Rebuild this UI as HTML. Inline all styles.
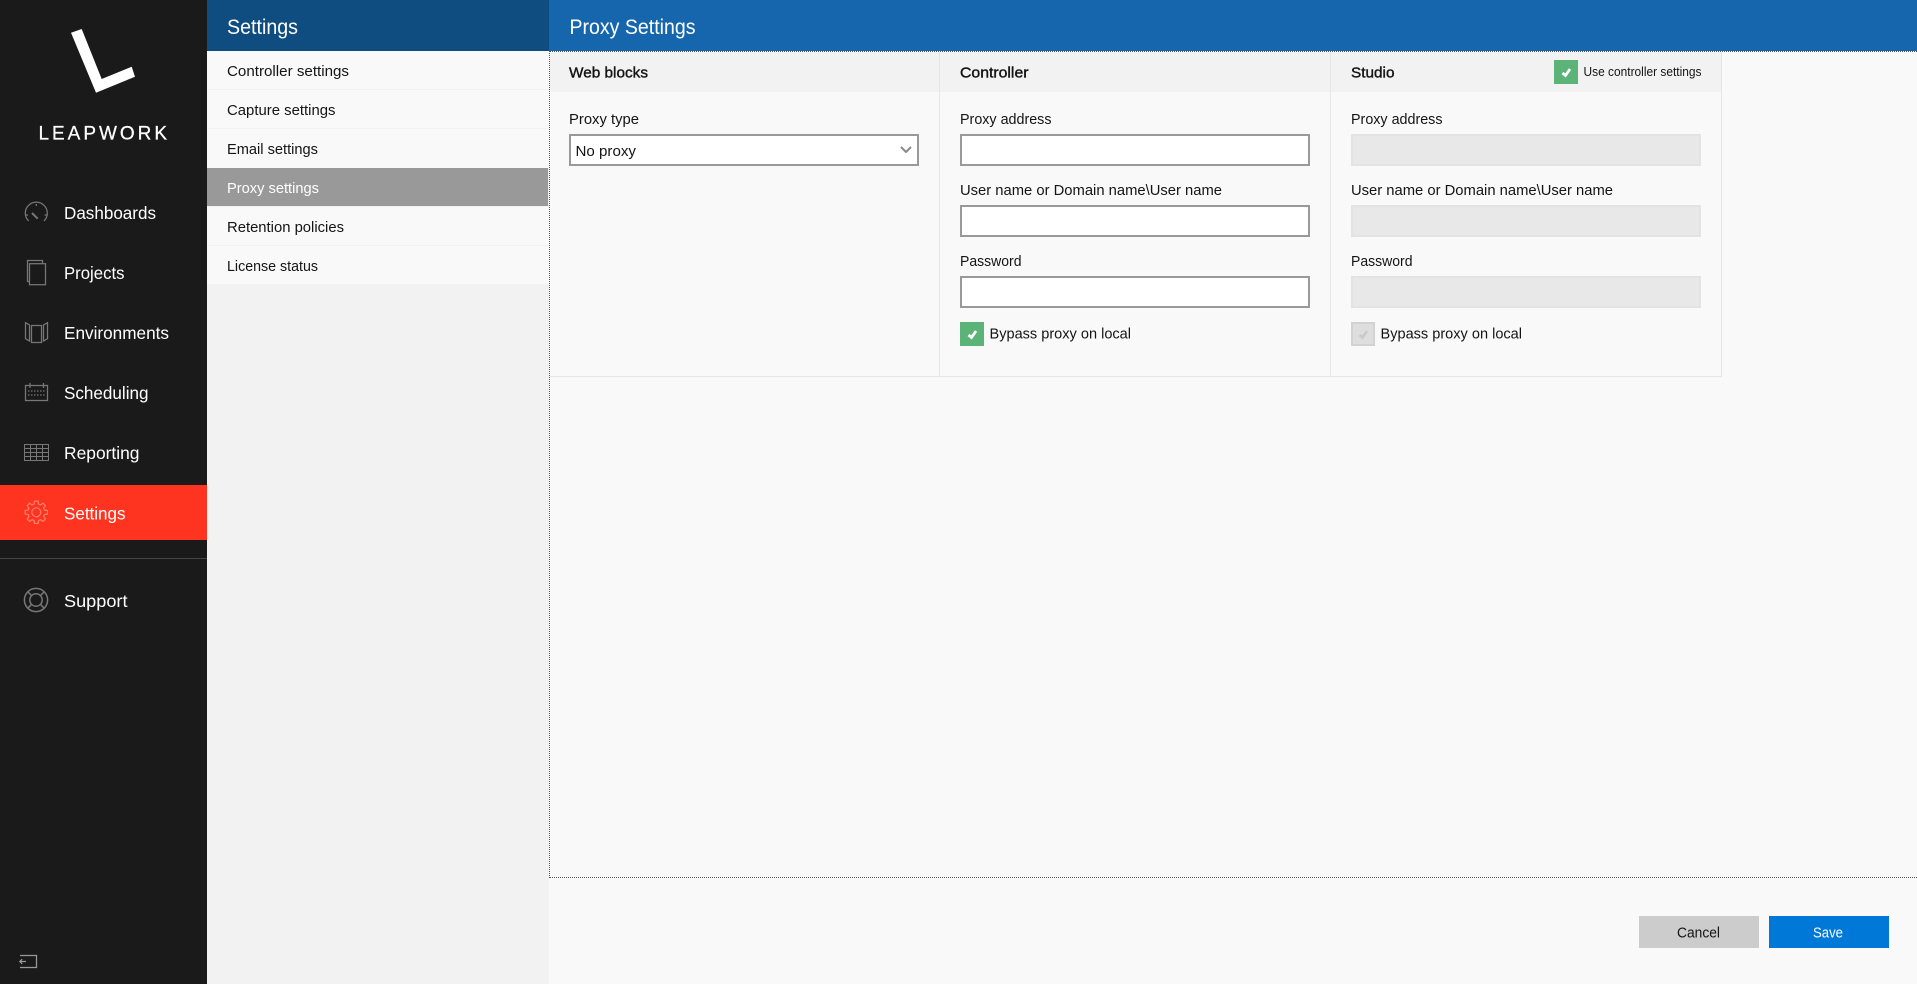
<!DOCTYPE html>
<html lang="en">
<head>
<meta charset="utf-8">
<title>Proxy Settings</title>
<style>
html,body{margin:0;padding:0;width:1917px;height:984px;overflow:hidden;background:#f9f9f9;font-family:"Liberation Sans",sans-serif}
.b{position:absolute;box-sizing:border-box}
.in{background:#fff;border:2px solid #999;width:350px;height:32px}
.dis{background:#e8e8e8;border:2px solid #e3e3e3;width:350px;height:32px}
svg{position:absolute;left:0;top:0}
text{font-family:"Liberation Sans",sans-serif;font-size:15px;fill:#141414}
.nav{font-size:17.5px;fill:#fff}
.hd{font-size:21.5px;fill:#fff}
.st{font-size:15px;stroke:#141414;stroke-width:.4}
.ic{fill:none;stroke:#777;stroke-width:1.25}
</style>
</head>
<body>
<!-- sidebar -->
<div class="b" style="left:0;top:0;width:207px;height:984px;background:#1a1a1a"></div>
<div class="b" style="left:0;top:485px;width:207px;height:55px;background:#ff3420"></div>
<div class="b" style="left:0;top:558px;width:207px;height:1px;background:#454545"></div>
<!-- sub panel -->
<div class="b" style="left:207px;top:0;width:342px;height:984px;background:#f2f2f2"></div>
<div class="b" style="left:207px;top:0;width:342px;height:51px;background:#0f4c7f"></div>
<div class="b" style="left:207px;top:51px;width:342px;height:38px;background:#f9f9f9"></div>
<div class="b" style="left:207px;top:90px;width:342px;height:38px;background:#f9f9f9"></div>
<div class="b" style="left:207px;top:129px;width:342px;height:39px;background:#f9f9f9"></div>
<div class="b" style="left:207px;top:168px;width:341px;height:38px;background:#999"></div>
<div class="b" style="left:207px;top:207px;width:342px;height:38px;background:#f9f9f9"></div>
<div class="b" style="left:207px;top:246px;width:342px;height:38px;background:#f9f9f9"></div>
<!-- main -->
<div class="b" style="left:549px;top:0;width:1368px;height:51px;background:#1666ae"></div>
<div class="b" style="left:549px;top:51px;width:1368px;height:827px;background:#f9f9f9;border:1px dotted #555;border-right:0"></div>
<div class="b" style="left:550px;top:52px;width:1171px;height:40px;background:#f2f2f2"></div>
<div class="b" style="left:550px;top:376px;width:1172px;height:1px;background:#e6e6e6"></div>
<div class="b" style="left:939px;top:52px;width:1px;height:325px;background:#e6e6e6"></div>
<div class="b" style="left:1330px;top:52px;width:1px;height:325px;background:#e6e6e6"></div>
<div class="b" style="left:1721px;top:52px;width:1px;height:325px;background:#e6e6e6"></div>
<!-- fields -->
<div class="b in" style="left:569px;top:134px"></div>
<div class="b in" style="left:960px;top:134px"></div>
<div class="b in" style="left:960px;top:205px"></div>
<div class="b in" style="left:960px;top:276px"></div>
<div class="b dis" style="left:1351px;top:134px"></div>
<div class="b dis" style="left:1351px;top:205px"></div>
<div class="b dis" style="left:1351px;top:276px"></div>
<div class="b" style="left:960px;top:322px;width:24px;height:24px;background:#5cb377"></div>
<div class="b" style="left:1351px;top:322px;width:24px;height:24px;background:#dedede;border:2px solid #d2d2d2"></div>
<div class="b" style="left:1554px;top:60px;width:24px;height:24px;background:#5cb377"></div>
<!-- buttons -->
<div class="b" style="left:1639px;top:916px;width:120px;height:32px;background:#ccc"></div>
<div class="b" style="left:1769px;top:916px;width:120px;height:32px;background:#0078d7"></div>

<svg width="1917" height="984" viewBox="0 0 1917 984" xmlns="http://www.w3.org/2000/svg">
<!-- logo -->
<polygon points="71,32.7 81.7,29 101.7,79 131.7,66.7 135,76.7 96,92.7" fill="#fff"/>
<text x="38.5" y="139.5" textLength="128.5" lengthAdjust="spacing" style="font-size:19px;fill:#fff;stroke:#fff;stroke-width:.25">LEAPWORK</text>

<!-- nav icons -->
<g class="ic">
<path d="M28.6 221A11 11 0 1 1 44 221"/>
<path d="M36.3 204v2M26 215h2M44.6 215h2"/>
<path d="M32 213l5.7 5.7" stroke-width="2"/>
<path d="M29.3 281.5H27.5V260.5H42.5V263.7"/>
<rect x="29.5" y="263.7" width="16" height="21"/>
<rect x="31.5" y="325.5" width="10" height="17"/>
<path d="M25.5 322.7l4 2.3v16l-4-2.3z"/>
<path d="M47.5 322.7l-4 2.3v16l4-2.3z"/>
<path d="M25.5 385.5h22v15h-22zM30 383v5M43.5 383v5"/>
<path d="M28 391h18M28 395h18" stroke-dasharray="1.5 1.5" stroke="#666" stroke-width="1.5"/>
<g shape-rendering="crispEdges" stroke-width="1">
<rect x="24.5" y="444.5" width="24" height="16"/>
<path d="M24.5 448.5h24M24.5 452.5h24M24.5 456.5h24M30.5 444.5v16M36.5 444.5v16M42.5 444.5v16"/>
</g>
<circle cx="36" cy="600" r="11.6" stroke-width="1.5"/>
<circle cx="36" cy="600" r="6.2" stroke-width="1.5"/>
<path d="M27.8 591.8l4 4M44.2 591.8l-4 4M27.8 608.2l4-4M44.2 608.2l-4-4" stroke-width="1.5"/>
<path d="M20 955.5H36.5V967.5H20M26 961.5H20M22.2 959.2L19.8 961.5L22.2 963.8" stroke="#999"/>
</g>
<g transform="translate(36.3 512.3)" fill="none" stroke="#ff7f6e" stroke-width="1.2">
<polygon points="8.21,2.2 7.36,4.25 9.14,6.64 6.64,9.14 4.25,7.36 2.2,8.21 1.77,11.16 -1.77,11.16 -2.2,8.21 -4.25,7.36 -6.64,9.14 -9.14,6.64 -7.36,4.25 -8.21,2.2 -11.16,1.77 -11.16,-1.77 -8.21,-2.2 -7.36,-4.25 -9.14,-6.64 -6.64,-9.14 -4.25,-7.36 -2.2,-8.21 -1.77,-11.16 1.77,-11.16 2.2,-8.21 4.25,-7.36 6.64,-9.14 9.14,-6.64 7.36,-4.25 8.21,-2.2 11.16,-1.77 11.16,1.77"/>
<circle r="4.5"/>
</g>

<!-- nav text -->
<text class="nav" x="64" y="219" textLength="92" lengthAdjust="spacingAndGlyphs">Dashboards</text>
<text class="nav" x="64" y="279" textLength="60.5" lengthAdjust="spacingAndGlyphs">Projects</text>
<text class="nav" x="64" y="339" textLength="105" lengthAdjust="spacingAndGlyphs">Environments</text>
<text class="nav" x="64" y="399" textLength="84.5" lengthAdjust="spacingAndGlyphs">Scheduling</text>
<text class="nav" x="64" y="459" textLength="75.5" lengthAdjust="spacingAndGlyphs">Reporting</text>
<text class="nav" x="64" y="519.5" textLength="61.5" lengthAdjust="spacingAndGlyphs">Settings</text>
<text class="nav" x="64" y="607" textLength="63.5" lengthAdjust="spacingAndGlyphs">Support</text>

<!-- headers -->
<text class="hd" x="227" y="34" textLength="71" lengthAdjust="spacingAndGlyphs">Settings</text>
<text class="hd" x="569.5" y="34" textLength="126" lengthAdjust="spacingAndGlyphs">Proxy Settings</text>

<!-- menu -->
<text x="227" y="76" textLength="122" lengthAdjust="spacingAndGlyphs">Controller settings</text>
<text x="227" y="115" textLength="108.5" lengthAdjust="spacingAndGlyphs">Capture settings</text>
<text x="227" y="154" textLength="91" lengthAdjust="spacingAndGlyphs">Email settings</text>
<text x="227" y="193" textLength="92" lengthAdjust="spacingAndGlyphs" style="fill:#fff">Proxy settings</text>
<text x="227" y="232" textLength="117" lengthAdjust="spacingAndGlyphs">Retention policies</text>
<text x="227" y="271" textLength="91" lengthAdjust="spacingAndGlyphs">License status</text>

<!-- column headings -->
<text class="st" x="569" y="77.7" textLength="79" lengthAdjust="spacingAndGlyphs">Web blocks</text>
<text class="st" x="960" y="77.7" textLength="68.5" lengthAdjust="spacingAndGlyphs">Controller</text>
<text class="st" x="1351" y="77.7" textLength="43.5" lengthAdjust="spacingAndGlyphs">Studio</text>
<text x="1583.5" y="76" textLength="118" lengthAdjust="spacingAndGlyphs" style="font-size:12.5px">Use controller settings</text>

<!-- web blocks -->
<text x="569" y="124" textLength="70" lengthAdjust="spacingAndGlyphs">Proxy type</text>
<text x="575.5" y="156" textLength="60.5" lengthAdjust="spacingAndGlyphs">No proxy</text>
<path d="M901 147l5 5 5-5" fill="none" stroke="#8a8a8a" stroke-width="2"/>

<!-- controller -->
<text x="960" y="124" textLength="91.5" lengthAdjust="spacingAndGlyphs">Proxy address</text>
<text x="960" y="195" textLength="262" lengthAdjust="spacingAndGlyphs">User name or Domain name\User name</text>
<text x="960" y="266" textLength="61.5" lengthAdjust="spacingAndGlyphs">Password</text>
<text x="989.5" y="338.7" textLength="141.5" lengthAdjust="spacingAndGlyphs">Bypass proxy on local</text>

<!-- studio -->
<text x="1351" y="124" textLength="91.5" lengthAdjust="spacingAndGlyphs">Proxy address</text>
<text x="1351" y="195" textLength="262" lengthAdjust="spacingAndGlyphs">User name or Domain name\User name</text>
<text x="1351" y="266" textLength="61.5" lengthAdjust="spacingAndGlyphs">Password</text>
<text x="1380.5" y="338.7" textLength="141.5" lengthAdjust="spacingAndGlyphs">Bypass proxy on local</text>

<!-- checks -->
<path d="M968.5 335l3 2.5 4.5-6.5" fill="none" stroke="#fff" stroke-width="2.8"/>
<path d="M1359.5 335l3 2.5 4.5-6.5" fill="none" stroke="#cacaca" stroke-width="2.8"/>
<path d="M1562.5 73l3 2.5 4.5-6.5" fill="none" stroke="#fff" stroke-width="2.8"/>

<!-- buttons -->
<text x="1677" y="937.3" textLength="43" lengthAdjust="spacingAndGlyphs">Cancel</text>
<text x="1813" y="937.3" textLength="30" lengthAdjust="spacingAndGlyphs" style="fill:#fff">Save</text>
</svg>
</body>
</html>
